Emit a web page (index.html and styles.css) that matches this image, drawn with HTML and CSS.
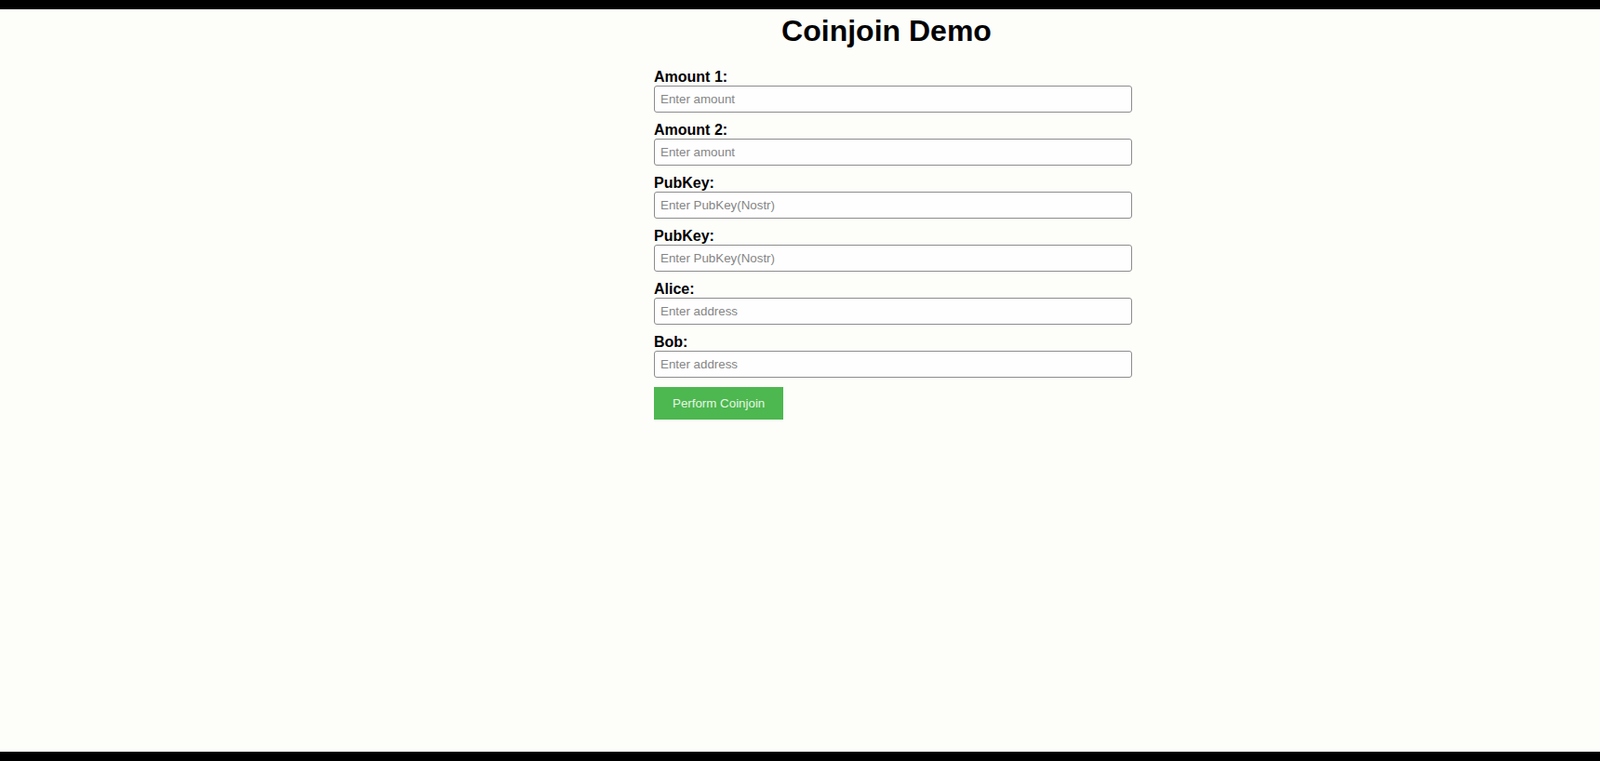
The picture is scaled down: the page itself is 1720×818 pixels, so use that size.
FILE: index.html
```html
<!DOCTYPE html>
<html lang="en">
<head>
<meta charset="utf-8">
<title>Coinjoin Demo</title>
<link rel="stylesheet" href="styles.css">
</head>
<body>
<div class="bar"></div>
<main class="page">
  <h1 class="title">Coinjoin Demo</h1>
  <form class="form">
    <div class="group">
      <label class="label" for="a1">Amount 1:</label>
      <input class="field" id="a1" type="text" placeholder="Enter amount">
    </div>
    <div class="group">
      <label class="label" for="a2">Amount 2:</label>
      <input class="field" id="a2" type="text" placeholder="Enter amount">
    </div>
    <div class="group">
      <label class="label" for="p1">PubKey:</label>
      <input class="field" id="p1" type="text" placeholder="Enter PubKey(Nostr)">
    </div>
    <div class="group">
      <label class="label" for="p2">PubKey:</label>
      <input class="field" id="p2" type="text" placeholder="Enter PubKey(Nostr)">
    </div>
    <div class="group">
      <label class="label" for="al">Alice:</label>
      <input class="field" id="al" type="text" placeholder="Enter address">
    </div>
    <div class="group">
      <label class="label" for="bo">Bob:</label>
      <input class="field" id="bo" type="text" placeholder="Enter address">
    </div>
    <button class="btn" type="button">Perform Coinjoin</button>
  </form>
</main>
<div class="bar"></div>
</body>
</html>
```

FILE: styles.css
```css
html, body {
  margin: 0;
  padding: 0;
}
body {
  height: 818px;
  display: flex;
  flex-direction: column;
  background: #fdfdfa;
  font-family: "Liberation Sans", Arial, sans-serif;
  color: #000;
  overflow: hidden;
}
.bar {
  height: 10px;
  flex: none;
  background: #000;
}
.page {
  flex: 1;
  padding: 5px 0 0 186px;
}
.title {
  margin: 0 0 22px;
  font-size: 32px;
  line-height: 37px;
  font-weight: bold;
  text-align: center;
}
.form {
  width: 500px;
  margin: 0 auto;
}
.group {
  margin-bottom: 10px;
}
.label {
  display: block;
  font-size: 16px;
  line-height: 18px;
  font-weight: bold;
}
.field {
  display: block;
  box-sizing: content-box;
  width: 500px;
  height: 15px;
  margin: 0;
  padding: 6px;
  border: 1px solid #8c8c8c;
  border-radius: 3px;
  background: #fefefe;
  font-family: "Liberation Sans", Arial, sans-serif;
  font-size: 13.33px;
  line-height: 15px;
  color: #000;
  outline: none;
}
.field::placeholder {
  color: #858585;
}
.btn {
  display: block;
  height: 35px;
  margin: 0;
  padding: 0 20px;
  border: none;
  border-radius: 0;
  background: #4cb84f;
  color: #e8f5e6;
  font-family: "Liberation Sans", Arial, sans-serif;
  font-size: 13.33px;
  cursor: pointer;
}
```
